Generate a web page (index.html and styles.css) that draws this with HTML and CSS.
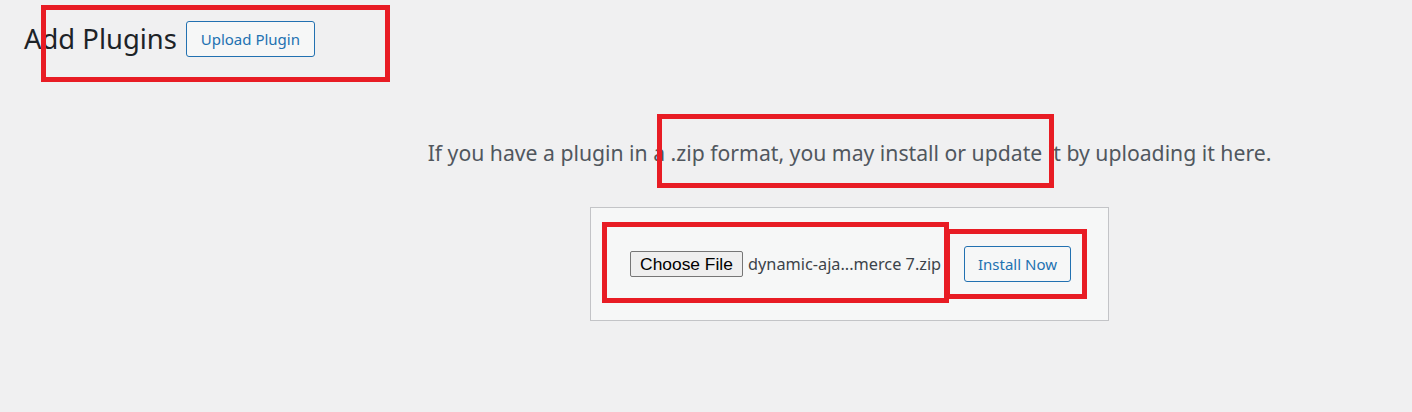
FILE: index.html
```html
<!DOCTYPE html>
<html lang="en">
<head>
<meta charset="utf-8">
<title>Add Plugins</title>
<link rel="stylesheet" href="styles.css">
</head>
<body>
<div class="wrap">
  <div class="title-row">
    <h1 class="page-title">Add Plugins</h1>
    <a class="btn title-action" href="#">Upload Plugin</a>
  </div>
  <div class="upload-plugin">
    <p class="install-help">If you have a plugin in a .zip format, you may install or update it by uploading it here.</p>
    <form class="upload-form">
      <span class="file-btn">Choose File</span>
      <span class="file-name">dynamic-aja...merce 7.zip</span>
      <span class="btn install-btn">Install Now</span>
    </form>
  </div>
</div>
<div class="mark mark-title"></div>
<div class="mark mark-help"></div>
<div class="mark mark-file"></div>
<div class="mark mark-install"></div>
</body>
</html>
```

FILE: styles.css
```css
html, body {
  margin: 0;
  padding: 0;
  overflow: hidden;
}
body {
  background: #f0f0f1;
  font-family: "Noto Sans", "Open Sans", sans-serif;
  color: #3c434a;
  width: 1412px;
  height: 412px;
  position: relative;
}
.wrap {
  padding-left: 24px;
}
.title-row {
  display: flex;
  align-items: center;
  gap: 9px;
  padding-top: 21px;
  height: 36px;
}
.page-title {
  margin: 0;
  font-size: 27.4px;
  font-weight: 400;
  line-height: 36px;
  color: #1d2327;
}
.btn {
  display: inline-flex;
  align-items: center;
  justify-content: center;
  box-sizing: border-box;
  height: 36px;
  border: 1px solid #2271b1;
  border-radius: 3px;
  background: #f6f7f7;
  color: #2271b1;
  font-size: 15px;
  text-decoration: none;
}
.title-action {
  width: 129px;
}
.upload-plugin {
  margin-left: 263px;
  text-align: center;
}
.install-help {
  margin: 81px 0 0;
  font-size: 21.2px;
  line-height: 30px;
  color: #50575e;
}
.upload-form {
  display: inline-flex;
  align-items: center;
  margin-top: 39px;
  padding: 38px 37px 38px 39px;
  background: #f6f7f7;
  border: 1px solid #c3c4c7;
}
.file-btn {
  box-sizing: border-box;
  width: 113px;
  height: 26px;
  display: inline-flex;
  align-items: center;
  justify-content: center;
  border: 1px solid #767676;
  border-radius: 2px;
  background: #efefef;
  font-family: "Liberation Sans", Arial, sans-serif;
  font-size: 17.4px;
  color: #000;
}
.file-name {
  margin-left: 5px;
  width: 194px;
  text-align: left;
  white-space: nowrap;
  font-size: 16.3px;
  color: #3c434a;
}
.install-btn {
  margin-left: 22px;
  width: 107px;
}
.mark {
  position: absolute;
  box-sizing: border-box;
  border: 5px solid #e81c24;
}
.mark-title {
  left: 41px;
  top: 5px;
  width: 349px;
  height: 77px;
}
.mark-help {
  left: 657px;
  top: 114px;
  width: 397px;
  height: 74px;
}
.mark-file {
  left: 602px;
  top: 222px;
  width: 347px;
  height: 81px;
}
.mark-install {
  left: 945px;
  top: 229px;
  width: 142px;
  height: 70px;
}
```
